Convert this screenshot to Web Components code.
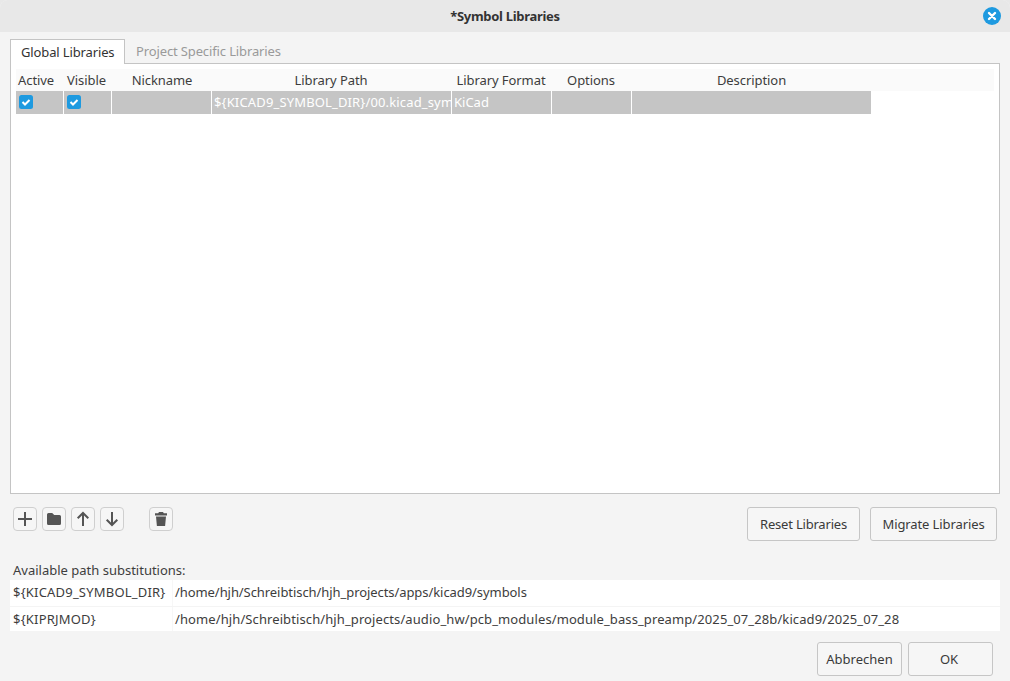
<!DOCTYPE html>
<html>
<head>
<meta charset="utf-8">
<title>Symbol Libraries</title>
<style>
    html, body { margin: 0; height: 100%; background: #e8e8e8; }
    body { font: 13px "Noto Sans", sans-serif; color: #3d3d3d; }
</style>
</head>
<body>
<lib-dialog>
    <title-bar slot="title">*Symbol Libraries</title-bar>
    <lib-tabs slot="tabs">
        <lib-grid></lib-grid>
    </lib-tabs>
    <div slot="tools-left" style="display:flex;gap:5px">
        <icon-button icon="add"></icon-button>
        <icon-button icon="folder"></icon-button>
        <icon-button icon="up"></icon-button>
        <icon-button icon="down"></icon-button>
        <icon-button icon="trash" style="margin-left:20px"></icon-button>
    </div>
    <div slot="tools-right" style="display:flex;gap:10px">
        <push-button style="width:113px;letter-spacing:-.2px">Reset Libraries</push-button>
        <push-button style="width:127px;letter-spacing:-.1px">Migrate Libraries</push-button>
    </div>
    <subst-table slot="subst"></subst-table>
    <div slot="actions" style="display:flex;gap:6px">
        <push-button style="width:85px">Abbrechen</push-button>
        <push-button style="width:85px;padding-right:3px">OK</push-button>
    </div>
</lib-dialog>

<script>
const ICONS = {
    add: '<path d="M11 4v14M4 11h14" stroke="#555" stroke-width="2" fill="none"/>',
    folder: '<path d="M4 6.500A1.500 1.500 0 0 1 5.500 5h3.700l2 2h5.300A1.500 1.500 0 0 1 18 8.500v7a1.500 1.500 0 0 1-1.500 1.500h-11A1.500 1.500 0 0 1 4 15.500z" fill="#555"/>',
    up: '<path d="M11 18V5.500M5.700 10.300L11 5l5.300 5.300" stroke="#555" stroke-width="2" fill="none"/>',
    down: '<path d="M11 4v12.500M5.700 11.700L11 17l5.300-5.300" stroke="#555" stroke-width="2" fill="none"/>',
    trash: '<path d="M9 4h4l.8 1.300H17V7.500H5V5.300h3.200zM6 8.500h10l-.9 9.500H6.900z" fill="#555"/>'
};

customElements.define('title-bar', class extends HTMLElement {
    constructor() {
        super();
        this.attachShadow({mode: 'open'}).innerHTML = `
        <style>
            :host { display: flex; align-items: center; justify-content: center; height: 32px; background: #e8e8e8; position: relative; font-weight: 700; font-size: 13px; letter-spacing: -.3px; color: #333; }
            svg { position: absolute; right: 9px; top: 7px; }
        </style>
        <slot></slot>
        <svg width="18" height="18" viewBox="0 0 18 18">
            <circle cx="9" cy="9" r="9" fill="#1e9ae0"/>
            <path d="M6 6l6 6M12 6l-6 6" stroke="#fff" stroke-width="2.400" stroke-linecap="round"/>
        </svg>`;
    }
});

customElements.define('lib-tabs', class extends HTMLElement {
    constructor() {
        super();
        this.attachShadow({mode: 'open'}).innerHTML = `
        <style>
            :host { display: flex; flex-direction: column; height: 455px; }
            .tabs { display: flex; height: 24px; flex: none; position: relative; z-index: 1; }
            .tab { box-sizing: border-box; padding: 0 10px; line-height: 25px; white-space: nowrap; letter-spacing: -.13px; }
            .on { width: 115px; height: 25px; background: #fff; border: 1px solid #c4c4c4; border-bottom: 0; color: #333; }
            .off { color: #9a9a9a; padding-left: 11px; }
            .page { flex: 1; box-sizing: border-box; background: #fff; border: 1px solid #c4c4c4; padding: 5px 5px 0; }
        </style>
        <div class="tabs">
            <div class="tab on">Global Libraries</div>
            <div class="tab off">Project Specific Libraries</div>
        </div>
        <div class="page"><slot></slot></div>`;
    }
});

customElements.define('lib-grid', class extends HTMLElement {
    constructor() {
        super();
        const cols = [
            ['Active', 48, 'left', 2, 0], ['Visible', 48, 'left', 3, 0], ['Nickname', 100, 'center', 0, 0],
            ['Library Path', 240, 'center', 0, 2], ['Library Format', 100, 'center', 0, 2],
            ['Options', 80, 'center', 0, 2], ['Description', 240, 'center', 0, 1]
        ];
        const head = cols.map(c => `<div class="hd ${c[2]}" style="width:${c[1]}px;padding:0 ${c[4]}px 0 ${c[3]}px">${c[0]}</div>`).join('');
        const check = '<svg width="14" height="14" viewBox="0 0 14 14"><rect width="14" height="14" rx="2.500" fill="#1e9ae0"/><path d="M3.500 7l2.500 2.500 4.500-4.500" stroke="#fff" stroke-width="2" fill="none"/></svg>';
        this.attachShadow({mode: 'open'}).innerHTML = `
        <style>
            :host { display: block; }
            .head { display: flex; height: 22px; background: #fafafa; align-items: center; letter-spacing: -.07px; }
            .hd { flex: none; box-sizing: border-box; white-space: nowrap; }
            .center { text-align: center; }
            .row { display: flex; height: 23px; width: 855px; background: #c5c5c5; color: #fff; }
            .c { flex: none; box-sizing: border-box; border-right: 1px solid #fff; overflow: hidden; white-space: nowrap; line-height: 23px; padding-left: 2px; }
            .c svg { display: block; margin: 4px 0 0 1px; }
            .c:last-child { border-right: 0; }
            .path { letter-spacing: .15px; }
        </style>
        <div class="head">${head}</div>
        <div class="row">
            <div class="c" style="width:48px">${check}</div>
            <div class="c" style="width:48px">${check}</div>
            <div class="c" style="width:100px"></div>
            <div class="c path" style="width:240px">\${KICAD9_SYMBOL_DIR}/00.kicad_sym</div>
            <div class="c" style="width:100px">KiCad</div>
            <div class="c" style="width:80px"></div>
            <div class="c" style="width:239px"></div>
        </div>`;
    }
});

customElements.define('icon-button', class extends HTMLElement {
    constructor() {
        super();
        this.attachShadow({mode: 'open'}).innerHTML = `
        <style>
            :host { display: block; box-sizing: border-box; width: 24px; height: 24px; border: 1px solid #cfcfcf; border-radius: 4px; background: #f6f6f6; }
            svg { display: block; }
        </style>
        <svg width="22" height="22" viewBox="0 0 22 22">${ICONS[this.getAttribute('icon')]}</svg>`;
    }
});

customElements.define('push-button', class extends HTMLElement {
    constructor() {
        super();
        this.attachShadow({mode: 'open'}).innerHTML = `
        <style>
            :host { display: flex; align-items: center; justify-content: center; box-sizing: border-box; height: 34px; border: 1px solid #c6c6c6; border-radius: 3px; background: #f6f6f6; color: #3a3a3a; white-space: nowrap; }
        </style>
        <slot></slot>`;
    }
});

customElements.define('subst-table', class extends HTMLElement {
    constructor() {
        super();
        this.attachShadow({mode: 'open'}).innerHTML = `
        <style>
            :host { display: block; background: #fff; }
            .r { display: grid; grid-template-columns: 162px 1fr; height: 25.500px; line-height: 25px; white-space: nowrap; }
            .r + .r { border-top: 1px solid #f4f4f4; box-sizing: border-box; }
            .r div { padding-left: 3px; overflow: hidden; }
            .r div + div { border-left: 1px solid #f7f7f7; padding-left: 2px; }
        </style>
        <div class="r"><div style="letter-spacing:.2px">\${KICAD9_SYMBOL_DIR}</div><div style="letter-spacing:-.07px">/home/hjh/Schreibtisch/hjh_projects/apps/kicad9/symbols</div></div>
        <div class="r"><div style="letter-spacing:.2px">\${KIPRJMOD}</div><div style="letter-spacing:.1px">/home/hjh/Schreibtisch/hjh_projects/audio_hw/pcb_modules/module_bass_preamp/2025_07_28b/kicad9/2025_07_28</div></div>`;
    }
});

customElements.define('lib-dialog', class extends HTMLElement {
    constructor() {
        super();
        this.attachShadow({mode: 'open'}).innerHTML = `
        <style>
            :host { display: block; height: 681px; background: #f4f4f4; border-radius: 8px 8px 0 0; overflow: hidden; }
            .body { padding: 7px 10px 0; }
            .tools { display: flex; justify-content: space-between; align-items: flex-start; margin: 13px 3px 0 3px; height: 34px; }
            .label { margin: 20px 0 0 3px; height: 19px; line-height: 18px; }
            .actions { display: flex; justify-content: flex-end; margin: 11px 7px 0 0; }
        </style>
        <slot name="title"></slot>
        <div class="body">
            <slot name="tabs"></slot>
            <div class="tools"><slot name="tools-left"></slot><slot name="tools-right"></slot></div>
            <div class="label">Available path substitutions:</div>
            <slot name="subst"></slot>
            <div class="actions"><slot name="actions"></slot></div>
        </div>`;
    }
});
</script>
</body>
</html>
